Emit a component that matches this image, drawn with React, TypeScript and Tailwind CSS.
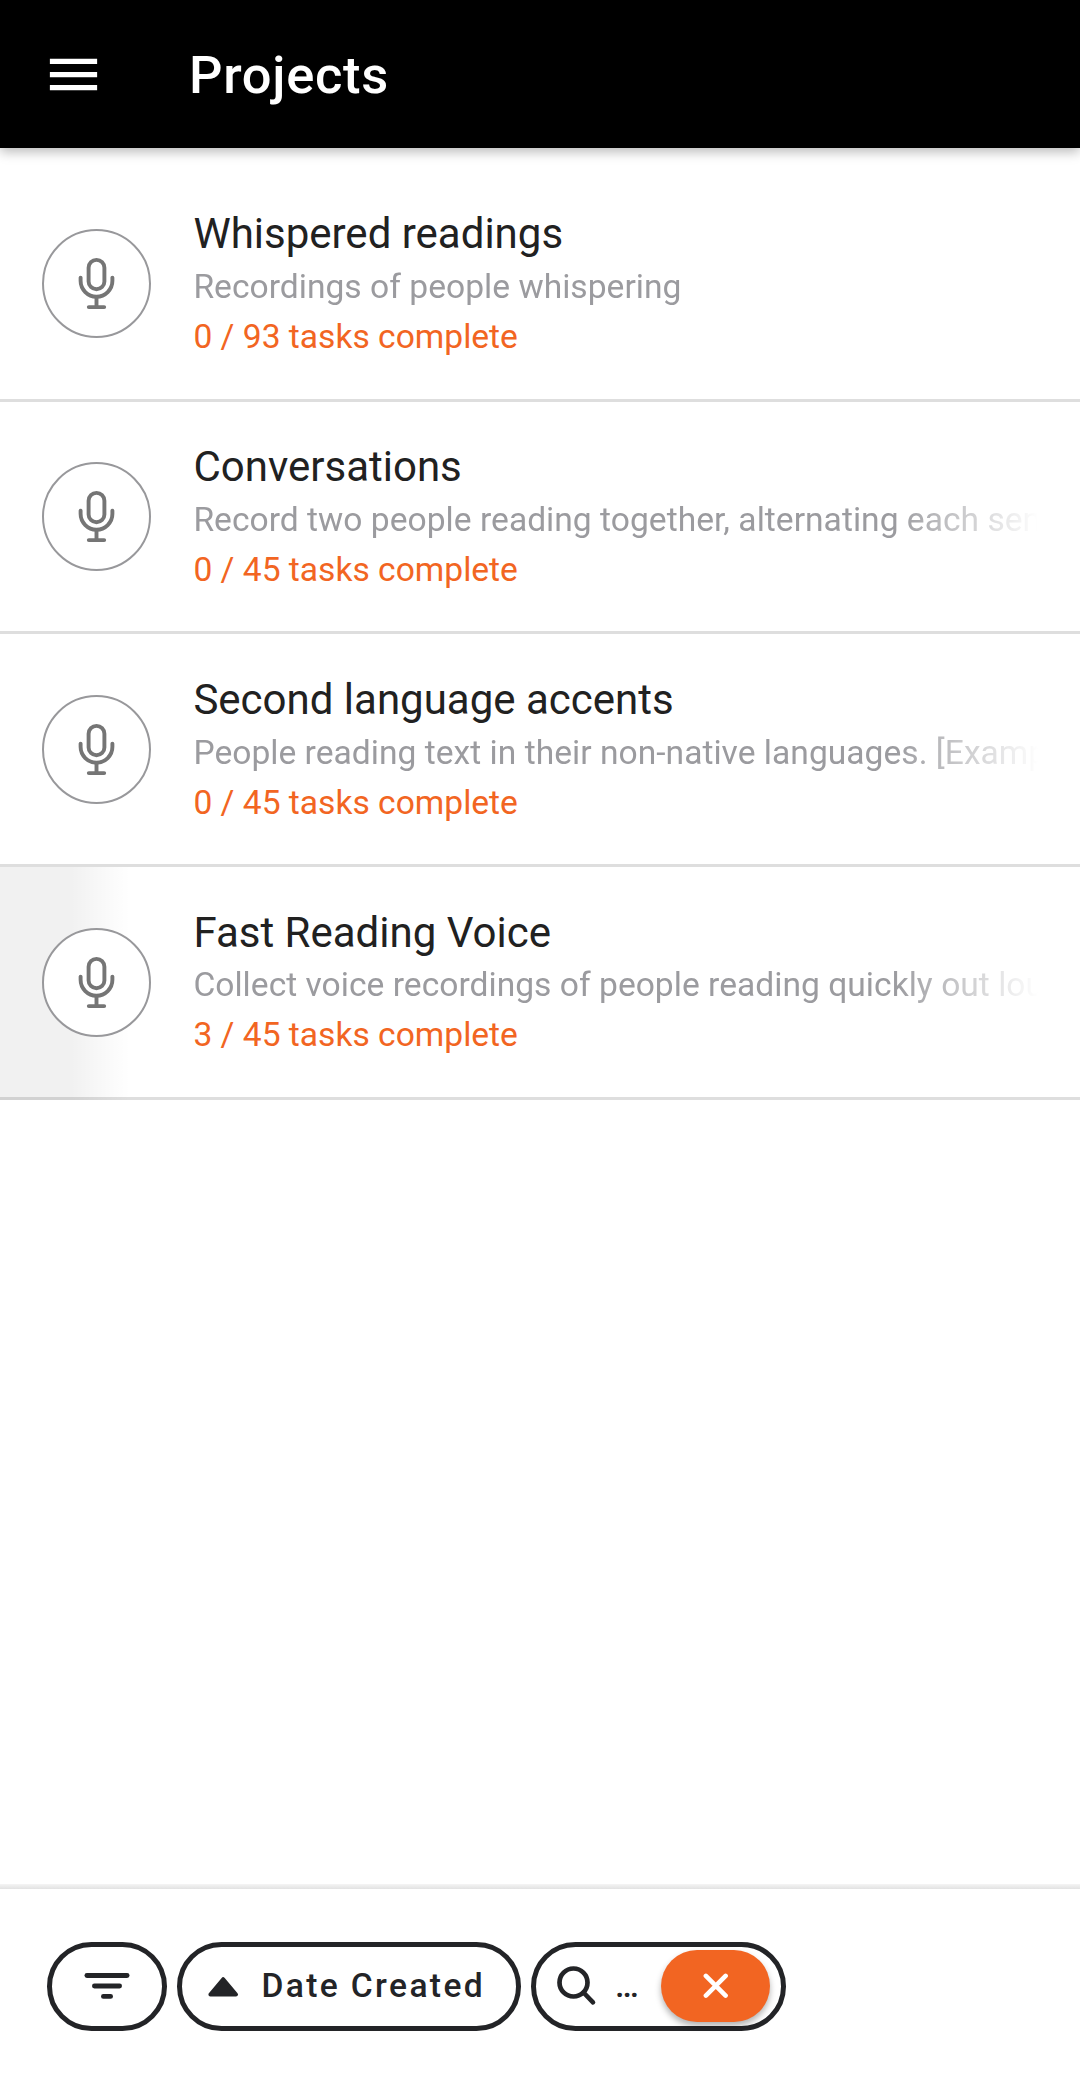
import React from "react";

type Project = {
  title: string;
  description: string;
  progress: string;
  layout: string;
  titleLayout: string;
  pressed?: boolean;
};

const projects: Project[] = [
  {
    title: "Whispered readings",
    description: "Recordings of people whispering",
    progress: "0 / 93 tasks complete",
    layout: "h-[233px] pt-[39px]",
    titleLayout: "mb-px",
  },
  {
    title: "Conversations",
    description: "Record two people reading together, alternating each sentence.",
    progress: "0 / 45 tasks complete",
    layout: "h-[232px] pt-[39px]",
    titleLayout: "mb-px",
  },
  {
    title: "Second language accents",
    description: "People reading text in their non-native languages. [Example]",
    progress: "0 / 45 tasks complete",
    layout: "h-[233px] pt-[40px]",
    titleLayout: "mb-[0.5px]",
  },
  {
    title: "Fast Reading Voice",
    description: "Collect voice recordings of people reading quickly out loud.",
    progress: "3 / 45 tasks complete",
    layout: "h-[233px] pt-[40px]",
    titleLayout: "mb-0",
    pressed: true,
  },
];

function MicIcon() {
  return (
    <svg width="41" height="57" viewBox="76 256 41 57" fill="none" stroke="#757575" strokeWidth="3.9" strokeLinecap="round">
      <rect x="88.6" y="260.9" width="15.8" height="29.4" rx="7.9" />
      <path d="M80.6 278.6V281.8a15.9 15.9 0 0 0 31.8 0V278.6" />
      <path d="M96.5 298.5V308M88.8 308.1H104.2" />
    </svg>
  );
}

function ProjectRow({ title, description, progress, layout, titleLayout, pressed }: Project) {
  return (
    <li className={`relative flex shrink-0 items-start border-b-3 border-[#dedede] pl-[42px] pr-[42px] ${layout}`}>
      {pressed && (
        <div className="absolute inset-x-0 top-0 -bottom-[3px] bg-[linear-gradient(to_right,rgba(0,0,0,0.055)_72px,rgba(0,0,0,0.014)_112px,transparent_130px)]" />
      )}
      <div className="relative mt-[21px] flex size-[109.4px] shrink-0 items-center justify-center rounded-full border-2 border-[#98989b] bg-white">
        <MicIcon />
      </div>
      <div className="relative ml-[42px] min-w-0 flex-1">
        <h2 className={`text-[42px] leading-[52px] text-[#212121] ${titleLayout}`}>{title}</h2>
        <p className="overflow-hidden whitespace-nowrap text-[33.6px] leading-[52px] tracking-[0.02px] text-[#9b9b9f] [mask-image:linear-gradient(to_right,#000_83%,transparent_100%)]">
          {description}
        </p>
        <p className="text-[33.6px] leading-[48px] text-[#f26522]">{progress}</p>
      </div>
    </li>
  );
}

export default function App() {
  return (
    <div className="flex h-[2080px] w-[1080px] flex-col overflow-hidden bg-white font-['Roboto',sans-serif]">
      <header className="z-10 flex h-[148px] shrink-0 items-center bg-black pt-[1px] pl-[42px] text-white shadow-[0_4px_11px_rgba(0,0,0,0.27)]">
        <svg width="63" height="63" viewBox="0 0 24 24" fill="currentColor">
          <path d="M3 18h18v-2H3v2zm0-5h18v-2H3v2zm0-7v2h18V6H3z" />
        </svg>
        <h1 className="mt-[2px] ml-[84px] text-[52.5px] leading-[63px] font-medium tracking-[0.7px]">Projects</h1>
      </header>

      <ul className="flex flex-1 flex-col pt-[21px]">
        {projects.map((project) => (
          <ProjectRow key={project.title} {...project} />
        ))}
      </ul>

      <div className="h-[5px] shrink-0 bg-linear-to-b from-[#f5f5f5] to-[#e2e2e2]" />
      <footer className="flex h-[191px] shrink-0 gap-[10px] pt-[53px] pl-[47px] text-[#232427]">
        <button className="flex h-[89px] w-[120px] items-center justify-center rounded-full border-5 border-[#232427] pb-px">
          <svg width="46" height="26" viewBox="0 0 46 26" fill="currentColor">
            <rect x="0.5" y="0" width="45" height="5" rx="2.4" />
            <rect x="8" y="10.6" width="30" height="4.8" rx="2.4" />
            <rect x="17" y="21" width="12" height="4.8" rx="2.4" />
          </svg>
        </button>

        <button className="flex h-[89px] w-[344px] items-center rounded-full border-5 border-[#232427] pl-[25px]">
          <svg width="32" height="22" viewBox="0 0 32 22" fill="currentColor" stroke="currentColor" strokeWidth="4" strokeLinejoin="round">
            <path d="M16.2 3.2L29 18.5H3.4z" />
          </svg>
          <span className="relative -top-px ml-[22.5px] whitespace-nowrap text-[33.6px] leading-[40px] font-medium tracking-[2.36px]">
            Date Created
          </span>
        </button>

        <div className="flex h-[89px] w-[255px] items-center rounded-full border-5 border-[#232427] pb-px pl-[20px]">
          <svg width="42" height="42" viewBox="0 0 42 42" fill="none" stroke="currentColor" strokeLinecap="round">
            <circle cx="17.5" cy="17.5" r="14" strokeWidth="4.7" />
            <path d="M27.5 27.5L37 37.3" strokeWidth="4.6" />
          </svg>
          <span className="relative ml-[17px] w-[25px] text-[33.6px] leading-[40px] font-medium">…</span>
          <button className="ml-[21px] flex h-[72px] w-[109px] items-center justify-center rounded-full bg-[#f26522] text-white shadow-[0_4px_6px_rgba(0,0,0,0.3)]">
            <svg width="26" height="26" viewBox="0 0 26 26" stroke="currentColor" strokeWidth="4.6" strokeLinecap="round">
              <path d="M2.9 2.9L22.6 22.6M22.6 2.9L2.9 22.6" />
            </svg>
          </button>
        </div>
      </footer>
    </div>
  );
}
